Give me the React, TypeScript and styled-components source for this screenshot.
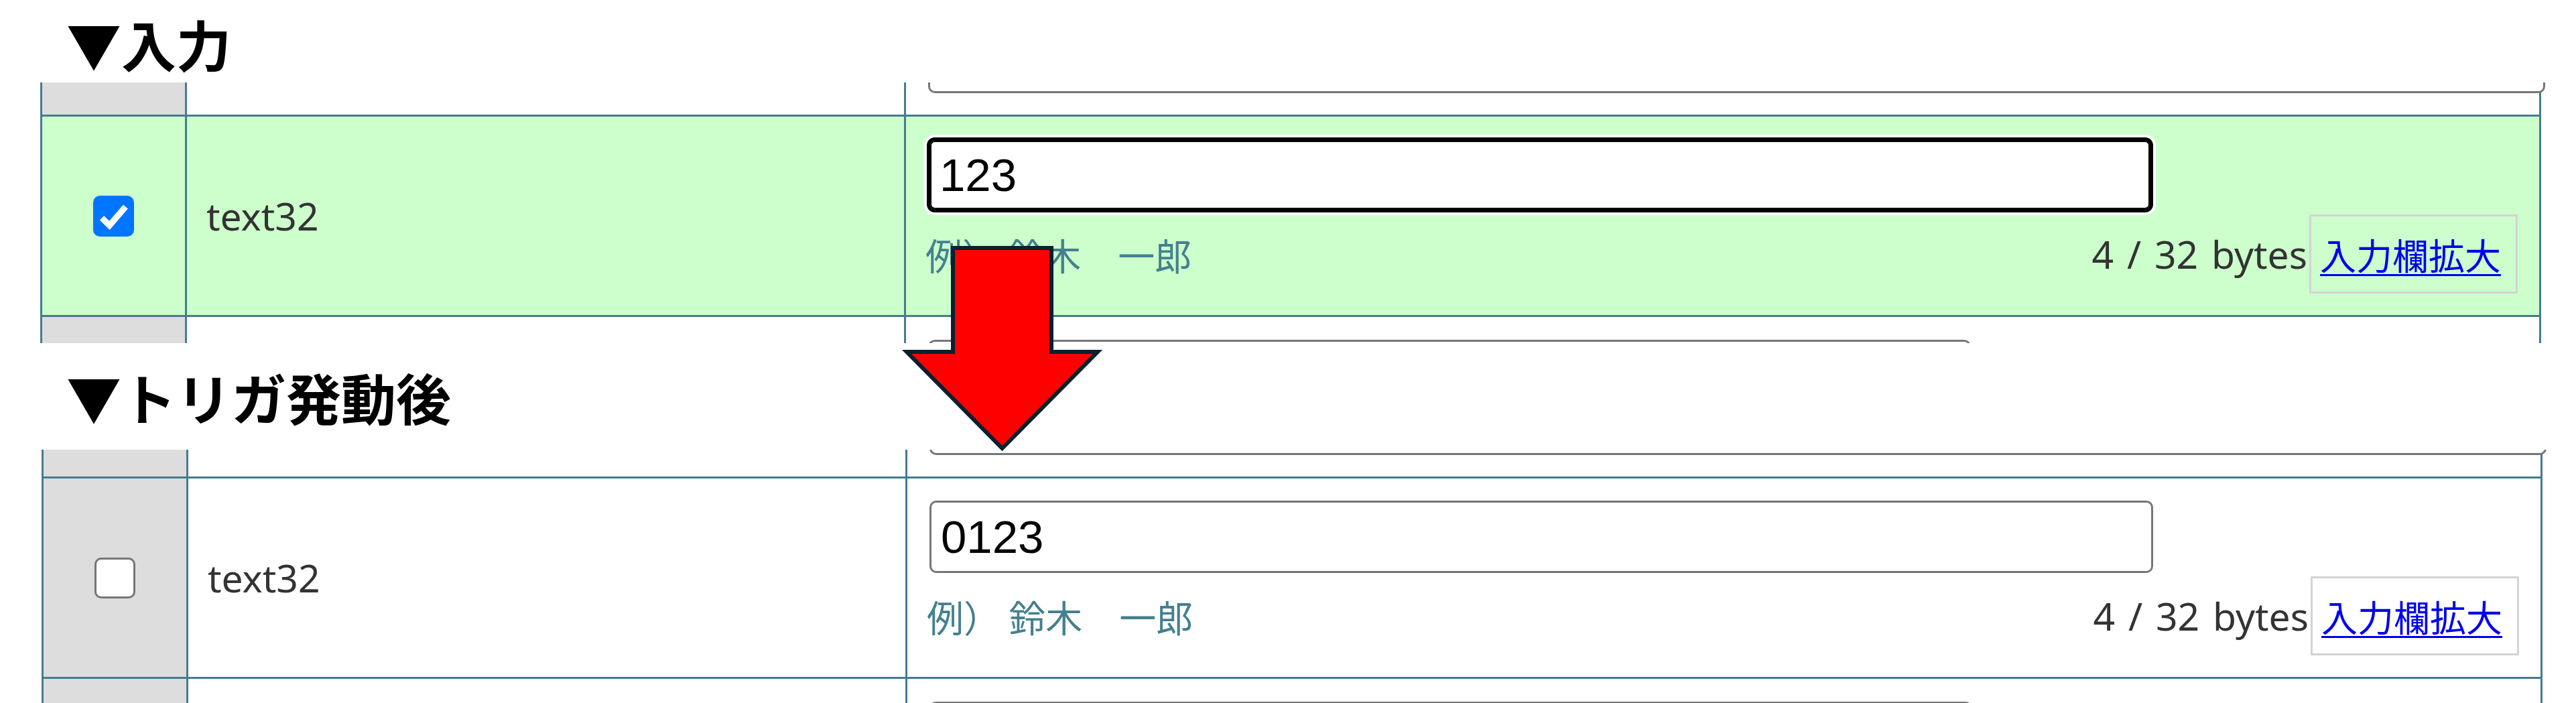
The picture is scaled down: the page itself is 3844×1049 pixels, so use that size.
import styled, { createGlobalStyle, css } from "styled-components";

const Palette = {
  Line: "#457c8f",
  Active: "#ccffcc",
  Gutter: "#dddddd",
  Hint: "#44808f",
  Text: "#333333",
  Link: "#0000ee",
};

const GlobalStyle = createGlobalStyle`
  html, body {
    margin: 0;
    padding: 0;
    background: #fff;
  }
  body {
    font-family: "Noto Sans", "Noto Sans CJK JP", sans-serif;
    overflow: hidden;
  }
`;

const Page = styled.div`
  position: relative;
  width: 3844px;
  height: 1049px;
  overflow: hidden;
`;

const Heading = styled.h2<{ $top: number; $bottom: number }>`
  margin: 0;
  padding: ${(p) => p.$top}px 0 ${(p) => p.$bottom}px 99px;
  font-family: "Noto Sans CJK JP", sans-serif;
  font-weight: 700;
  font-size: 82px;
  line-height: 82px;
  color: #000;
`;

const TableClip = styled.div<{ $height: number; $shift: number }>`
  height: ${(p) => p.$height}px;
  overflow: hidden;
  padding-left: ${(p) => 60 + p.$shift}px;
`;

const Row = styled.div<{ $height: number; $active?: boolean }>`
  display: flex;
  width: 3732px;
  height: ${(p) => p.$height}px;
  border-bottom: 3px solid ${Palette.Line};
  background: ${(p) => (p.$active ? Palette.Active : "#fff")};
`;

const CheckCell = styled.div<{ $active?: boolean }>`
  flex: 0 0 219px;
  min-width: 0;
  box-sizing: border-box;
  border-left: 3px solid ${Palette.Line};
  border-right: 3px solid ${Palette.Line};
  background: ${(p) => (p.$active ? Palette.Active : Palette.Gutter)};
  display: flex;
  align-items: center;
  justify-content: center;
`;

const NameCell = styled.div`
  flex: 0 0 1073px;
  min-width: 0;
  box-sizing: border-box;
  border-right: 3px solid ${Palette.Line};
  padding-left: 29px;
  display: flex;
  align-items: center;
  font-size: 57px;
  color: ${Palette.Text};
`;

const FieldCell = styled.div<{ $clip?: "top" | "bottom" }>`
  flex: 0 0 2440px;
  min-width: 0;
  box-sizing: border-box;
  border-right: 3px solid ${Palette.Line};
  display: flex;
  flex-direction: column;
  align-items: flex-start;
  ${(p) =>
    p.$clip === "top"
      ? css`
          justify-content: flex-end;
          padding: 0 32px 32px 33px;
        `
      : p.$clip === "bottom"
        ? css`
            justify-content: flex-start;
            padding: 34px 32px 0 33px;
          `
        : css`
            padding: 33px 32px 32px 33px;
          `}
`;

const TextInput = styled.input<{ $width: number; $focused?: boolean }>`
  flex: 0 0 auto;
  box-sizing: border-box;
  width: ${(p) => p.$width}px;
  height: 108px;
  margin: 0;
  padding: 0 14px;
  border: 3px solid #767676;
  border-radius: 10px;
  background: #fff;
  font-family: "Liberation Sans", Arial, sans-serif;
  font-size: 69px;
  color: #000;
  outline: none;
  ${(p) =>
    p.$focused &&
    css`
      border-color: #000;
      box-shadow:
        inset 0 0 0 2px #000,
        0 0 0 2px #000,
        0 0 0 6px #fff;
    `}
`;

const Footer = styled.div`
  align-self: stretch;
  margin-top: 5px;
  height: 118px;
  display: flex;
  align-items: center;
  justify-content: space-between;
`;

const Hint = styled.span`
  font-family: "Noto Sans CJK JP", sans-serif;
  font-size: 55px;
  color: ${Palette.Hint};
  margin-left: -4px;
  white-space: pre;
`;

const Counter = styled.div`
  display: flex;
  align-items: center;
`;

const Bytes = styled.span`
  font-size: 57px;
  word-spacing: 5px;
  color: ${Palette.Text};
`;

const ExpandBox = styled.div`
  box-sizing: border-box;
  width: 311px;
  height: 118px;
  margin-left: 3px;
  padding-left: 13px;
  border: 3px solid #d3d3d3;
  display: flex;
  align-items: center;
`;

const ExpandLink = styled.a`
  font-family: "Noto Sans CJK JP", sans-serif;
  font-size: 54px;
  color: ${Palette.Link};
  text-decoration: underline;
  text-decoration-thickness: 3px;
  text-underline-offset: 6px;
`;

const Box = styled.span<{ $checked: boolean }>`
  box-sizing: border-box;
  width: 61px;
  height: 61px;
  border-radius: 10px;
  display: flex;
  align-items: center;
  justify-content: center;
  ${(p) =>
    p.$checked
      ? css`
          background: #0075ff;
        `
      : css`
          background: #fff;
          border: 3px solid #767676;
        `}
`;

const Arrow = styled.svg`
  position: absolute;
  left: 1338px;
  top: 363px;
  width: 316px;
  height: 318px;
`;

const CheckBox = ({ checked }: { checked: boolean }) => (
  <Box $checked={checked}>
    {checked && (
      <svg width="61" height="61" viewBox="0 0 16 16">
        <path
          d="M3.4 8.7 L6.4 11.6 L12.7 4.3"
          fill="none"
          stroke="#fff"
          strokeWidth="2.4"
        />
      </svg>
    )}
  </Box>
);

interface RecordTableProps {
  height: number;
  shift: number;
  topHeight: number;
  focused: boolean;
  value: string;
}

const RecordTable = ({
  height,
  shift,
  topHeight,
  focused,
  value,
}: RecordTableProps) => (
  <TableClip $height={height} $shift={shift}>
    <Row $height={topHeight}>
      <CheckCell />
      <NameCell />
      <FieldCell $clip="top">
        <TextInput $width={2413} readOnly value="" />
      </FieldCell>
    </Row>
    <Row $height={296} $active={focused}>
      <CheckCell $active={focused}>
        <CheckBox checked={focused} />
      </CheckCell>
      <NameCell>text32</NameCell>
      <FieldCell>
        <TextInput $width={1826} $focused={focused} readOnly value={value} />
        <Footer>
          <Hint>例） 鈴木　一郎</Hint>
          <Counter>
            <Bytes>4 / 32 bytes</Bytes>
            <ExpandBox>
              <ExpandLink href="#">入力欄拡大</ExpandLink>
            </ExpandBox>
          </Counter>
        </Footer>
      </FieldCell>
    </Row>
    <Row $height={200}>
      <CheckCell />
      <NameCell />
      <FieldCell $clip="bottom">
        <TextInput $width={1556} readOnly value="" />
      </FieldCell>
    </Row>
  </TableClip>
);

export default function App() {
  return (
    <Page>
      <GlobalStyle />
      <Heading $top={24} $bottom={17}>
        ▼入力
      </Heading>
      <RecordTable height={389} shift={0} topHeight={48} focused value="123" />
      <Heading $top={39} $bottom={38}>
        ▼トリガ発動後
      </Heading>
      <RecordTable
        height={378}
        shift={2}
        topHeight={40}
        focused={false}
        value="0123"
      />
      <Arrow viewBox="0 0 316 318">
        <polygon
          points="84,7 231,7 231,162 300,162 157.5,306 15,162 84,162"
          fill="#ff0000"
          stroke="#08202f"
          strokeWidth="6"
          strokeLinejoin="miter"
          strokeMiterlimit="10"
        />
      </Arrow>
    </Page>
  );
}
